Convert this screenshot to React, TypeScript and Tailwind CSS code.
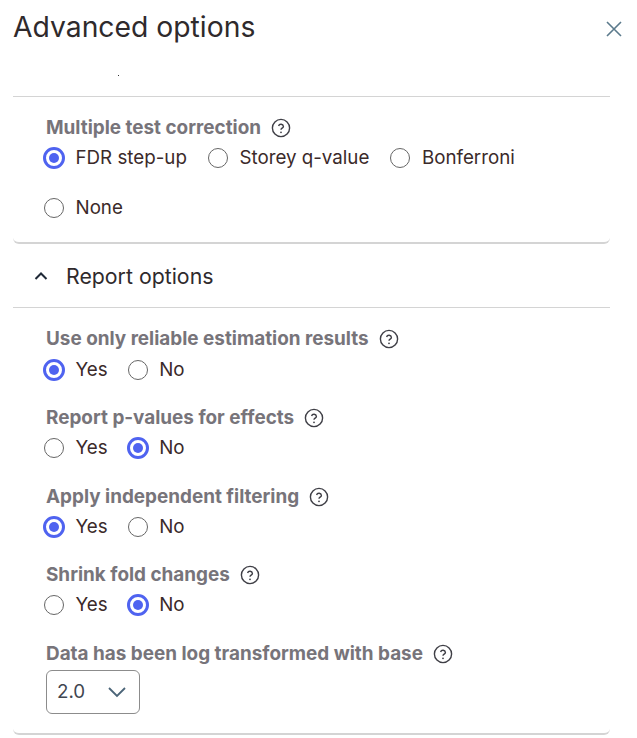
import React from "react";

function Help() {
  return (
    <svg width="20" height="20" viewBox="0 0 20 20" fill="none" className="shrink-0">
      <circle cx="10" cy="10" r="8.6" stroke="#3f3f46" strokeWidth="1.4" />
      <path d="M7.6 8a2.45 2.45 0 0 1 4.8.4c0 1.6-2.4 1.9-2.4 3.3" stroke="#3f3f46" strokeWidth="1.4" fill="none" />
      <circle cx="10" cy="14.3" r="0.9" fill="#3f3f46" />
    </svg>
  );
}

function Radio({ label, on }: { label: string; on?: boolean }) {
  return (
    <span className="flex items-center gap-[11.5px]">
      {on ? (
        <span className="-m-px flex h-[22px] w-[22px] items-center justify-center rounded-full border-[3px] border-[#4f63f0]">
          <span className="h-[10px] w-[10px] rounded-full bg-[#4f63f0]" />
        </span>
      ) : (
        <span className="h-[20px] w-[20px] rounded-full border-[1.5px] border-[#666]" />
      )}
      <span className="text-[18.75px] leading-[24px] text-[#3b2a2a]">{label}</span>
    </span>
  );
}

function Heading({ label }: { label: string }) {
  return (
    <div className="flex h-[24px] items-center gap-[10px] pl-px">
      <span className="text-[18.9px] font-bold text-[#77747a]">{label}</span>
      <Help />
    </div>
  );
}

function Field({ label, on, className }: { label: string; on: number; className: string }) {
  return (
    <div className={className}>
      <Heading label={label} />
      <div className="mt-[6px] ml-[-1px] flex gap-[20px]">
        <Radio label="Yes" on={on === 0} />
        <Radio label="No" on={on === 1} />
      </div>
    </div>
  );
}

export default function App() {
  return (
    <div className="h-[738px] w-[637px] overflow-hidden bg-white font-['Inter',sans-serif]">
      <div className="flex h-[75px] items-start justify-between pl-[13px] pr-[14px] pt-[9px]">
        <h1 className="text-[28.3px] leading-[36px] font-normal text-[#2f2a2c]">Advanced options</h1>
        <svg width="18" height="18" viewBox="0 0 18 18" className="mt-[11px]" fill="none" stroke="#5b7a8c" strokeWidth="1.6">
          <path d="M2 2l14 14M16 2L2 16" />
        </svg>
      </div>
      <div className="mx-[13px] w-[597px]">
        <div className="relative h-[22px] border-b border-[#d4d4d4]">
          <span className="absolute left-[105px] top-[0px] h-[1px] w-[1px] bg-[#333]" />
        </div>
        <div className="h-[147px] rounded-b-[6px] border-b-2 border-[#d4d4d4] pl-[32px] pt-[19px]">
          <Heading label="Multiple test correction" />
          <div className="ml-[-1px] mt-[6px] flex w-[500px] flex-wrap gap-x-[21px] gap-y-[26px]">
            <Radio label="FDR step-up" on />
            <Radio label="Storey q-value" />
            <Radio label="Bonferroni" />
            <Radio label="None" />
          </div>
        </div>
        <div className="flex h-[64px] items-center gap-[17px] border-b border-[#d4d4d4] pl-[20px]">
          <svg width="16" height="16" viewBox="0 0 16 16" fill="none" stroke="#1f2937" strokeWidth="2">
            <path d="M2.5 11L8 5.5 13.5 11" />
          </svg>
          <span className="pt-[2px] text-[21.3px] text-[#2f2a2c]">Report options</span>
        </div>
        <div className="h-[427px] rounded-b-[6px] border-b-2 border-[#d4d4d4] pl-[32px] pt-[19px]">
          <Field className="h-[79px] [&>div:last-child]:mt-[7px]" label="Use only reliable estimation results" on={0} />
          <Field className="h-[79px]" label="Report p-values for effects" on={1} />
          <Field className="h-[78px]" label="Apply independent filtering" on={0} />
          <Field className="h-[79px]" label="Shrink fold changes" on={1} />
          <Heading label="Data has been log transformed with base" />
          <div className="ml-px mt-[4px] flex h-[44px] w-[94px] items-center justify-between rounded-[6px] border border-[#8c8c8c] pl-[10px] pr-[12px]">
            <span className="text-[18.75px] text-[#3f4650]">2.0</span>
            <svg width="20" height="20" viewBox="0 0 20 20" fill="none" stroke="#4b6478" strokeWidth="1.8">
              <path d="M2 6l8 8 8-8" />
            </svg>
          </div>
        </div>
      </div>
    </div>
  );
}
